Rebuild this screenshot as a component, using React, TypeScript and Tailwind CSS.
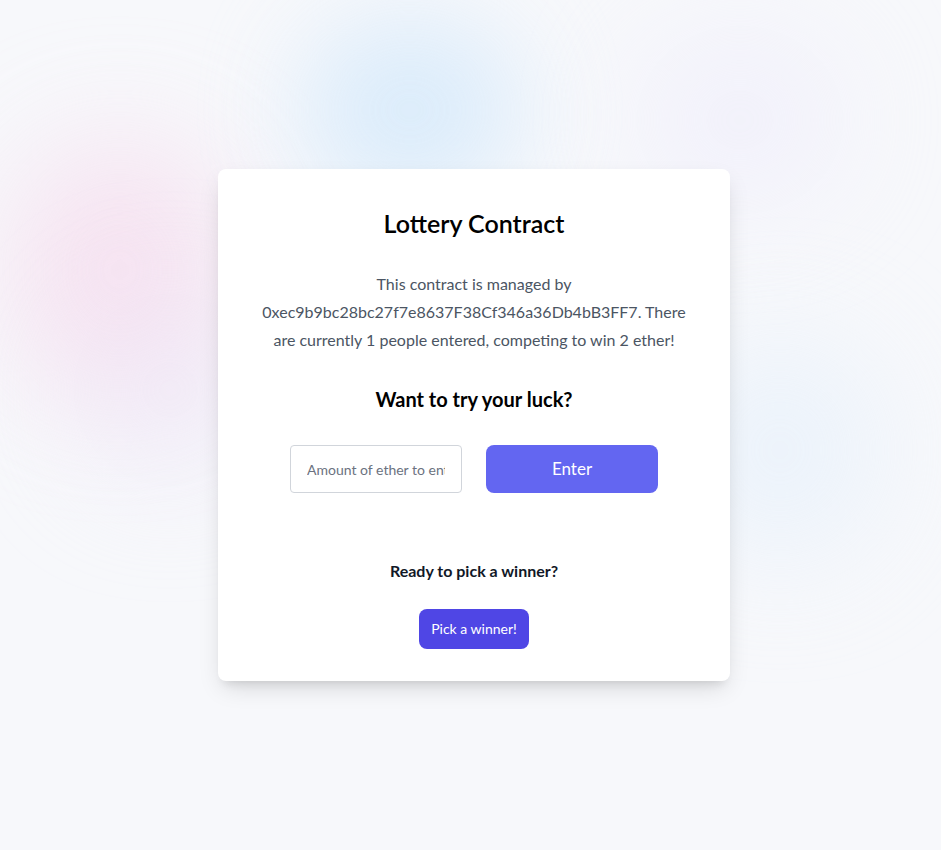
import React from "react";

export default function App() {
  return (
    <div className="relative min-h-[850px] w-full overflow-hidden bg-[#f7f8fb] font-['Lato',sans-serif]">
      <div className="pointer-events-none absolute left-[10px] top-[140px] h-[260px] w-[220px] rounded-full bg-[#f6d9ec] opacity-70 blur-[60px]" />
      <div className="pointer-events-none absolute left-[80px] top-[300px] h-[180px] w-[180px] rounded-full bg-[#ebe3f6] opacity-50 blur-[60px]" />
      <div className="pointer-events-none absolute left-[300px] top-[20px] h-[180px] w-[220px] rounded-full bg-[#d4e9fb] opacity-80 blur-[50px]" />
      <div className="pointer-events-none absolute left-[640px] top-[40px] h-[160px] w-[200px] rounded-full bg-[#ebe8fb] opacity-50 blur-[60px]" />
      <div className="pointer-events-none absolute left-[680px] top-[340px] h-[220px] w-[200px] rounded-full bg-[#e3effb] opacity-60 blur-[60px]" />
      <div className="relative flex justify-center pl-[7px] pt-[169px]">
        <div className="flex w-[512px] flex-col items-center rounded-lg bg-white px-8 pb-8 pt-[38px] text-center shadow-[0_10px_25px_-5px_rgba(0,0,0,0.15),0_8px_10px_-6px_rgba(0,0,0,0.1)]">
          <h1 className="text-[25px] leading-8 font-semibold text-black">Lottery Contract</h1>
          <p className="mt-[31px] w-[448px] text-base leading-[28px] text-[#4b5563]">
            This contract is managed by 0xec9b9bc28bc27f7e8637F38Cf346a36Db4bB3FF7. There are currently 1 people entered, competing to win 2 ether!
          </p>
          <h2 className="mt-[31px] text-xl leading-7 font-bold text-black">Want to try your luck?</h2>
          <div className="mt-[32px] flex gap-6">
            <input
              placeholder="Amount of ether to enter"
              className="h-12 w-[172px] rounded border border-[#d1d5db] px-4 text-sm text-gray-700 placeholder:text-[#6b7280] outline-none"
            />
            <button className="h-12 w-[172px] rounded-lg bg-[#6366f1] text-[17px] text-white">Enter</button>
          </div>
          <h3 className="mt-[66px] text-base leading-6 font-bold text-[#111827]">Ready to pick a winner?</h3>
          <button className="mt-[26px] h-10 rounded-lg bg-[#4f46e5] px-3 text-sm text-white">Pick a winner!</button>
        </div>
      </div>
    </div>
  );
}
